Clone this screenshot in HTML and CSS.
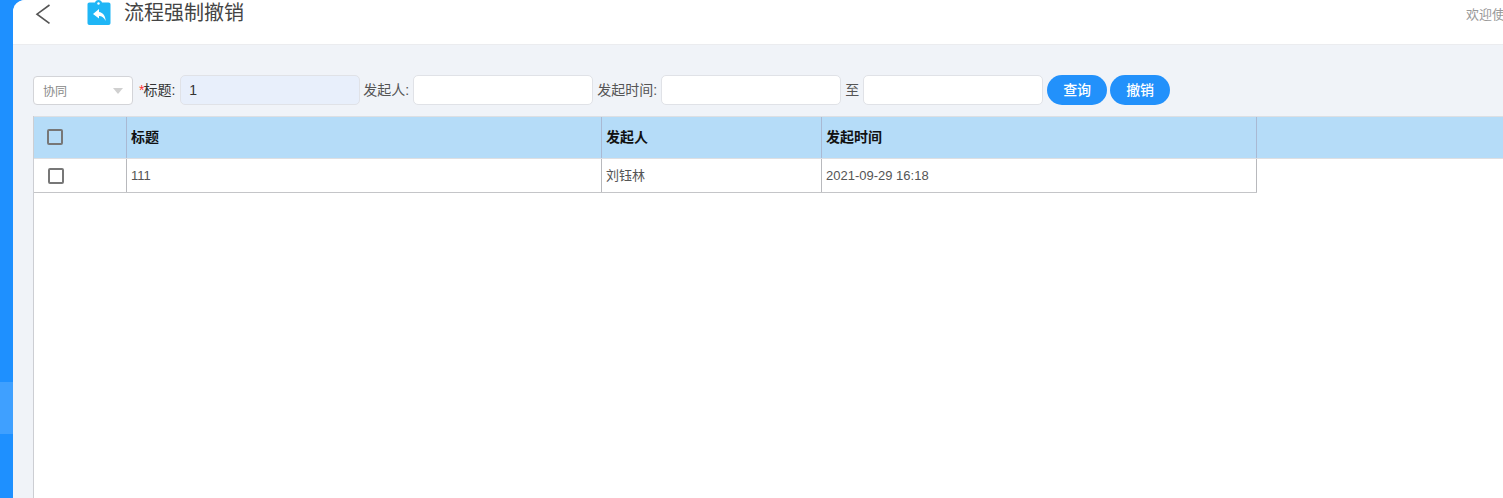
FILE: index.html
```html
<!DOCTYPE html>
<html lang="zh">
<head>
<meta charset="utf-8">
<title>流程强制撤销</title>
<link rel="stylesheet" href="styles.css">
</head>
<body>
<div class="app">
  <aside class="sidebar"><div class="side-active"></div></aside>
  <main class="main">
    <header class="topbar">
      <button class="back" aria-label="返回">
        <svg width="16" height="20" viewBox="0 0 16 20"><path d="M14.5 1 2 10.2 14.5 19.4" fill="none" stroke="#555" stroke-width="1.6"/></svg>
      </button>
      <svg class="page-icon" width="24" height="26" viewBox="0 0 24 26"><path d="M2.500 2.500H8C8.500 1 9.500 0 11.500 0S14.500 1 15 2.500H21.500C22.800 2.500 23.500 3.200 23.500 4.500V23C23.500 24.300 22.800 25 21.500 25H2.500C1.200 25 .5 24.300 .5 23V4.500C.5 3.200 1.200 2.500 2.500 2.500Z" fill="#1fb6f6"/><circle cx="11.500" cy="3.500" r="1.200" fill="#fff"/><path d="M12 9 6 14 12 18.500V16C15 16 17 17.500 18.700 21 18.500 16 16 12.500 12 12Z" fill="#fff"/></svg>
      <h1 class="page-title">流程强制撤销</h1>
      <span class="welcome">欢迎使用</span>
    </header>
    <section class="content">
      <form class="filters">
        <div class="select"><span>协同</span><i class="caret"></i></div>
        <label class="label label-title"><em>*</em>标题:</label>
        <input class="input input-title" value="1">
        <label class="label label-user">发起人:</label>
        <input class="input">
        <label class="label">发起时间:</label>
        <input class="input">
        <label class="label">至</label>
        <input class="input">
        <button type="button" class="btn btn-first">查询</button>
        <button type="button" class="btn">撤销</button>
      </form>
      <div class="grid">
        <div class="row head">
          <div class="cell c-check"><span class="check"></span></div>
          <div class="cell c-title">标题</div>
          <div class="cell c-user">发起人</div>
          <div class="cell c-time">发起时间</div>
        </div>
        <div class="row body-row">
          <div class="cell c-check"><span class="check"></span></div>
          <div class="cell c-title">111</div>
          <div class="cell c-user">刘钰林</div>
          <div class="cell c-time">2021-09-29 16:18</div>
        </div>
      </div>
    </section>
  </main>
</div>
</body>
</html>
```
FILE: styles.css
```css
* { box-sizing: border-box; }
html, body { margin: 0; height: 100%; overflow: hidden; }
body {
  font-family: "Liberation Sans", "Noto Sans CJK SC", sans-serif;
  font-size: 14px;
  color: #333;
  background: #1e90ff;
}
.app { display: flex; height: 498px; }
.sidebar { width: 13px; flex: none; background: #1e90ff; padding-top: 382px; }
.side-active { height: 52px; background: #3fa0ff; }
.main {
  flex: 1;
  min-width: 0;
  display: flex;
  flex-direction: column;
  background: #f0f3f8;
  border-top-left-radius: 12px;
  overflow: hidden;
}
.topbar {
  height: 45px;
  flex: none;
  background: #fff;
  border-bottom: 1px solid #ebecef;
  display: flex;
  align-items: flex-start;
  white-space: nowrap;
}
.back { border: 0; background: none; padding: 0; margin: 4px 0 0 22px; width: 16px; height: 20px; line-height: 0; }
.page-icon { margin: 0 0 0 36px; flex: none; }
.page-title { margin: 1px 0 0 13px; font-size: 20px; font-weight: 400; line-height: 24px; color: #444; flex: none; }
.welcome { margin: 7px 0 0 auto; width: 37px; overflow: hidden; font-size: 13px; line-height: 15px; color: #999; flex: none; }
.content { flex: 1; min-height: 0; display: flex; flex-direction: column; padding: 30px 0 0 20px; }
.filters { display: flex; align-items: center; height: 30px; flex: none; white-space: nowrap; }
.select {
  width: 100px;
  height: 29px;
  margin-top: 1px;
  padding: 0 9px;
  flex: none;
  display: flex;
  align-items: center;
  justify-content: space-between;
  background: #fff;
  border: 1px solid #d3d4d8;
  border-radius: 4px;
  font-size: 12px;
  color: #888;
}
.caret { border: 5.5px solid transparent; border-top: 6px solid #d0d0d0; border-bottom: 0; }
.label { color: #555; line-height: 30px; margin: 0 4px; flex: none; }
.label-title { margin-left: 6px; color: #333; margin-right: 5px; }
.label-user { margin-left: 3px; }
.label em { color: #f33; font-style: normal; margin-right: -1px; }
.input {
  width: 180px;
  height: 30px;
  flex: none;
  padding: 0 8px;
  background: #fff;
  border: 1px solid #e0e2e7;
  border-radius: 5px;
  font: inherit;
  color: #333;
  outline: 0;
}
.input-title { background: #e8effb; }
.btn {
  width: 60px;
  height: 30px;
  flex: none;
  margin-left: 3px;
  padding: 0 0 2px;
  border: 0;
  border-radius: 15px;
  background: #2291fb;
  color: #fff;
  font: inherit;
  font-weight: 500;
}
.btn-first { margin-left: 4px; }
.grid {
  flex: 1;
  margin-top: 11px;
  background: #fff;
  border-left: 1px solid #ccced3;
  font-size: 13px;
}
.row { display: flex; }
.head {
  height: 43px;
  background: #b5dcf8;
  border-top: 1px solid #dcdfe3;
  border-bottom: 1px solid #dedfe2;
  font-size: 14px;
  font-weight: 700;
  color: #111;
}
.body-row { height: 34px; width: 1223px; border-bottom: 1px solid #c4c5c8; color: #555; }
.cell { display: flex; align-items: center; padding-left: 4px; border-right: 1px solid #b8b9bd; flex: none; }
.head .cell { border-right-color: #a9b9d3; }
.c-check { width: 93px; }
.c-title { width: 475px; }
.c-user { width: 220px; }
.c-time { width: 435px; }
.check { width: 16px; height: 16px; margin-left: 10px; background: #fff; border: 2px solid #777; border-radius: 2px; }
.head .check { background: transparent; margin-left: 9px; margin-top: -1px; }
.head .c-title, .head .c-user, .head .c-time { padding-bottom: 3px; }
.body-row .c-title, .body-row .c-time { padding-bottom: 1px; }
.body-row .c-user { padding-bottom: 3px; }
```
